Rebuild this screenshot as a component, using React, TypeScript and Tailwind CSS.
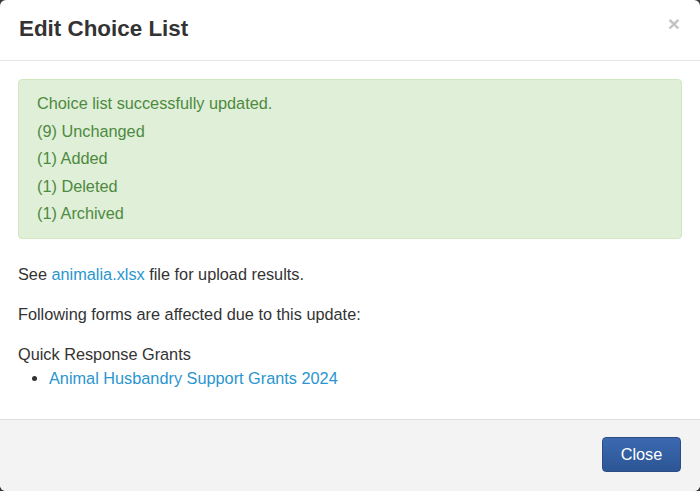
const App = () => {
  const counts = [
    "Choice list successfully updated.",
    "(9) Unchanged",
    "(1) Added",
    "(1) Deleted",
    "(1) Archived",
  ];

  return (
    <div className="h-[491px] w-[700px] bg-[#3a3a3a] overflow-hidden" style={{ fontFamily: '"Liberation Sans", Arial, sans-serif' }}>
      <div className="h-full w-full bg-white rounded-[6px] overflow-hidden flex flex-col text-[#333333]">
        {/* header */}
        <div className="h-[61px] shrink-0 border-b border-[#e5e5e5] flex items-center justify-between pl-[19px] pr-[20px]">
          <h4 className="text-[22.4px] font-bold leading-none pb-[2px]">Edit Choice List</h4>
          <button className="text-[#c4c4c4] text-[21px] font-bold leading-none -mt-[14px]">×</button>
        </div>

        {/* body */}
        <div className="flex-1 px-[18px] pt-[18px]">
          <div className="bg-[#e0efd8] border border-[#cfe8bf] rounded-[4px] px-[18px] py-[10px] text-[#4d8a40] text-[16.3px] mb-[23px]">
            {counts.map((line) => (
              <div key={line} className="leading-[27.5px]">{line}</div>
            ))}
          </div>
          <p className="text-[16.3px] leading-6 mb-4">
            See <a href="#" className="text-[#2a95cf]">animalia.xlsx</a> file for upload results.
          </p>
          <p className="text-[16.3px] leading-6 mb-4">Following forms are affected due to this update:</p>
          <div className="text-[16.3px] leading-6">Quick Response Grants</div>
          <ul className="list-disc pl-[31px] text-[16.3px] leading-6 marker:text-[#333333]">
            <li>
              <a href="#" className="text-[#2a95cf]">Animal Husbandry Support Grants 2024</a>
            </li>
          </ul>
        </div>

        {/* footer */}
        <div className="h-[72px] shrink-0 border-t border-[#dddddd] bg-[#f3f3f3] flex items-start justify-end pt-[17px] pr-[19px]">
          <button className="h-[35px] w-[79px] rounded-[4px] border border-[#2a4d86] bg-gradient-to-b from-[#3b69b1] to-[#2c5594] text-white text-[16.3px]">
            Close
          </button>
        </div>
      </div>
    </div>
  );
};

export default App;
